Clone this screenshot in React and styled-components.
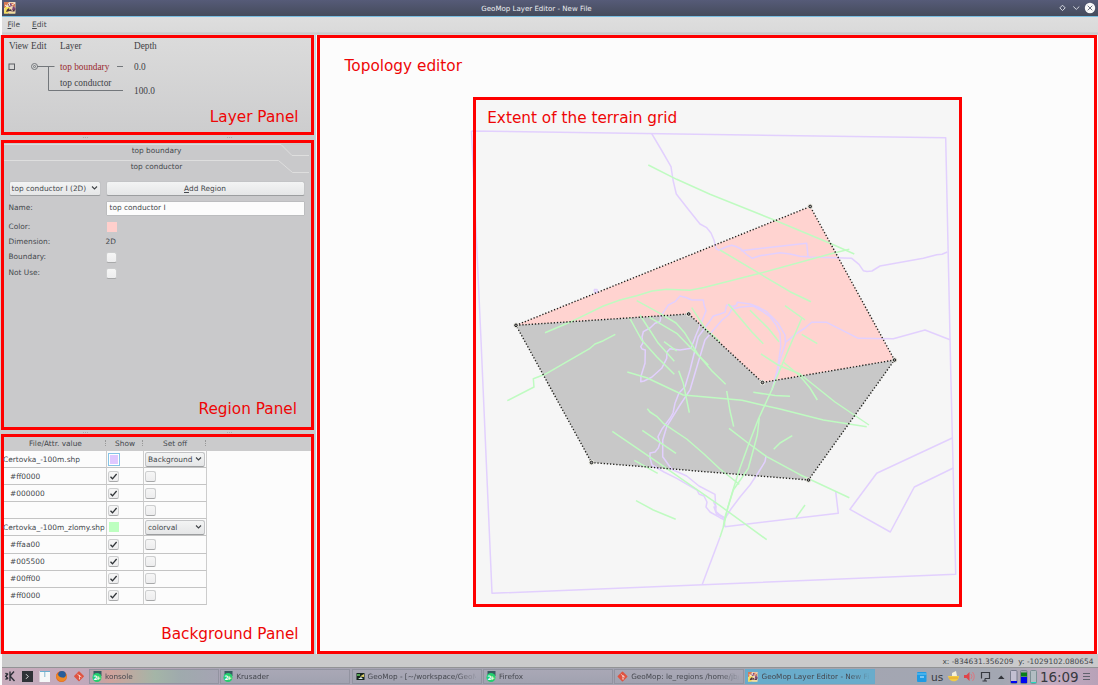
import React from "react";
import styled, { createGlobalStyle } from "styled-components";

const Global = createGlobalStyle`
  * { box-sizing: border-box; }
  body { margin: 0; background: #fff; font-family: "DejaVu Sans", sans-serif; font-size: 7.4px; color: #44484c; overflow: hidden; }
  #root { width: 1098px; height: 685px; }
`;

const Desktop = styled.div`
  width: 1098px; height: 685px; padding-left: 2px; display: flex; flex-direction: column; background: #fbfbfb;
`;
const TitleBar = styled.header`
  position: relative; height: 17px; flex: none; display: flex; align-items: center; justify-content: center;
  background: linear-gradient(#565b78, #454b5b); border-bottom: 1px solid #79bde0; color: #eceef2; font-size: 7.05px;
  padding-right: 27px;
`;
const AppBadge = styled.svg`position: absolute; left: 2px; top: 2px;`;
const WindowButtons = styled.svg`position: absolute; right: 0; top: 0;`;
const MenuBar = styled.nav`
  height: 18px; flex: none; display: flex; gap: 12px; padding: 2px 0 0 5.5px; align-items: flex-start; line-height: 11px;
  background: linear-gradient(#dedede, #dadada 15px, #c6c8ca 16px, #d5d5d5);
`;
const MenuItem = styled.span`
  font-size: 7.5px;
  u { text-underline-offset: 1px; text-decoration-thickness: 1px; }
`;
const Workspace = styled.main`
  height: 619px; flex: none; margin-left: -2px; display: flex; gap: 3px; padding-left: 1px;
  background: linear-gradient(90deg, transparent 315px, #b4d9e6 315px 316px, #f5fbfc 316px), linear-gradient(#dcdcdc, #cbcbcc 110px);
`;
const Sidebar = styled.div`width: 313px; display: flex; flex-direction: column;`;
const Splitter = styled.div`
  height: ${(p) => p.$h}px; flex: none; display: flex; align-items: center; justify-content: space-between; padding: 0 82px;
  background: #cbcbcc;
  &::before, &::after { content: ""; width: 5px; height: 1px; background: repeating-linear-gradient(90deg, #adadad 0 1px, transparent 1px 2px); }
`;
const Panel = styled.section`
  position: relative; height: ${(p) => p.$h}px; flex: none; border: 3px solid #fe0000; background: ${(p) => p.$bg};
`;
const Caption = styled.div`
  position: absolute; right: ${(p) => p.$right || 12.4}px; bottom: ${(p) => p.$bottom}px; color: #ee0606; font-size: 15.3px; line-height: 18px; white-space: nowrap;
`;

const LayerHead = styled.div`
  display: grid; grid-template-columns: 22px 29px 74px 80px; padding: 2px 0 0 5px; height: 21px; line-height: 12px;
  font-family: "Liberation Serif", serif; font-size: 9.3px; color: #3e4145;
`;
const LayerBody = styled.div`
  display: grid; grid-template-columns: 56px 74px 60px; height: 50px;
  font-family: "Liberation Serif", serif; font-size: 9.3px; color: #3e4145;
`;
const LayerTree = styled.svg`grid-column: 1 / 3; grid-row: 1; width: 130px; height: 50px;`;
const LayerNames = styled.div`
  grid-column: 2; grid-row: 1; padding-top: 2px; line-height: 12px; display: flex; flex-direction: column; gap: 4px;
  span:first-child { color: #9a2a2e; }
`;
const LayerDepths = styled.div`grid-column: 3; grid-row: 1; padding-top: 2px; line-height: 12px; display: flex; flex-direction: column; gap: 12px;`;

const Tabs = styled.div`position: relative; height: 36px; display: flex; flex-direction: column; text-align: center; padding-top: 0.6px;`;
const Tab = styled.div`height: 16.4px; line-height: 13px; position: relative; z-index: 1; padding-right: 2px;`;
const TabEdges = styled.svg`position: absolute; left: 0; top: 0;`;
const Form = styled.div`
  display: grid; grid-template-columns: 97px 198px; grid-template-rows: 17px 24px 14px 16px 14px 18px; align-items: center; padding: 0.5px 0 0 4.5px;
`;
const Label = styled.span`transform: translateY(-0.6px);`;
const Raised = styled.div`
  display: flex; align-items: center; justify-content: ${(p) => (p.$combo ? "space-between" : "center")};
  width: ${(p) => p.$w}px; height: 15px; padding: ${(p) => (p.$combo ? "0 2px" : "0")};
  border: 1px solid #c3c4c6; border-bottom-color: #9c9ea0; border-radius: 2.5px; background: linear-gradient(#f3f4f4, #e5e6e7);
  white-space: nowrap; u { text-underline-offset: 1px; }
`;
const NameInput = styled.div`
  width: 199px; height: 15px; border: 1px solid #bcbdbf; background: #fcfcfc; line-height: 12.4px; padding-left: 3px; border-radius: 1px;
`;
const Swatch = styled.span`
  display: block; width: ${(p) => (p.$focus ? 12 : 10)}px; height: ${(p) => (p.$focus ? 13 : 10)}px; background: ${(p) => p.$c};
  ${(p) => (p.$focus ? "border: 1px solid #86c4e6; box-shadow: inset 0 0 0 1px #fff;" : "margin: -1px 0 0 1px;")}
`;
const Box = styled.span`
  display: flex; align-items: center; justify-content: center; width: 11px; height: 11px; border: 1px solid #cdcecf; border-bottom-color: #a8a9aa; border-radius: 2.5px;
  background: linear-gradient(#f6f6f6, #ededee);
`;

const TableHead = styled.div`
  display: grid; grid-template-columns: 102px 37px 63px; height: 14px; line-height: 13px; background: #cbcbcc; text-align: center;
`;
const HeadCell = styled.span`position: relative; padding-left: 1px; &::after { content: ""; position: absolute; right: 0; top: 3px; height: 6px; border-right: 1px dotted #999; }`;
const TableRow = styled.div`display: grid; grid-template-columns: 103px 37px 63px; height: 17.1px;`;
const Cell = styled.div`
  display: flex; align-items: center; border-right: 1px solid #cdcdcd; border-bottom: 1px solid #c4c4c4; white-space: nowrap;
  padding-left: ${(p) => p.$pad || 0}px; font-size: 7.45px;
`;
const FileName = styled.span`margin-left: ${(p) => (p.$root ? -1 : 0)}px;`;

const Editor = styled.section`position: relative; width: 780px; border: 3px solid #fe0000; background: #fcfcfc;`;
const EditorTitle = styled.h1`
  position: absolute; left: 24.6px; top: 19px; margin: 0; font-size: 15.3px; font-weight: 400; line-height: 18px; color: #ee0606;
`;
const MapCanvas = styled.svg`position: absolute; left: 0; top: 0;`;
const ExtentFrame = styled.div`
  position: absolute; left: 152.7px; top: 59px; width: 489.5px; height: 510px; border: 3px solid #fe0000; padding: 9px 11.5px;
  color: #ee0606; font-size: 15.3px; line-height: 18px;
`;
const StatusBar = styled.footer`
  height: 14px; flex: none; background: #cacacb; text-align: right; padding-right: 4.5px; line-height: 15px; font-size: 7.45px; white-space: pre;
  border-bottom: 1px solid #929395;
`;
const Taskbar = styled.div`
  height: 17px; flex: none; display: flex; align-items: center; overflow: hidden; 
  background: linear-gradient(90deg, #c7acbc 0, #c2a9bb 80px, #a9a5b5 220px, #a3a4b1 700px, #a3a7b2 1000px, #c3abc0 1050px, #b8a2b8);
`;
const Launchers = styled.svg`flex: none; width: 87px; height: 17px;`;
const Task = styled.div`
  position: relative; width: 130px; height: 15px; margin-right: 1.3px; flex: none; display: flex; align-items: center; gap: 3px; padding-left: 2px;
  font-size: 7.3px; overflow: hidden; white-space: nowrap; border: 1px solid ${(p) => (p.$active ? "#68aacb" : "#9293a0")};
  background: ${(p) => p.$bg || "linear-gradient(#a9a8b6, #a1a2b0)"}; color: #45474e;
  svg { flex: none; }
  span { -webkit-mask-image: linear-gradient(90deg, #000 88px, transparent 110px); width: 108px; }
`;
const Tray = styled.div`margin-left: auto; display: flex; align-items: center; color: #37393f; height: 17px;`;
const Lang = styled.span`font-size: 10.6px; width: 17px; margin-left: -1px;`;
const Clock = styled.span`font-size: 13.5px; width: 43px; margin-left: 3px; letter-spacing: -0.1px;`;

const Chevron = () => (
  <svg width="7" height="6" viewBox="0 0 7 6"><path d="M1 1.5 3.5 4 6 1.5" fill="none" stroke="#3f4347" strokeWidth="1.1" /></svg>
);
const Check = ({ on }) => (
  <Box>{on && <svg width="9" height="9" viewBox="0 0 9 9"><path d="M1.5 4.8 3.5 6.8 7.6 2" fill="none" stroke="#2f3337" strokeWidth="1.3" /></svg>}</Box>
);
const PixelLogo = () => (
  <g>
    <rect width="11.5" height="11.5" fill="#f2d8b4" />
    <path d="M0 0H5L3 3 1 6H0ZM7 1H11V5L8 4Z" fill="#d67a56" />
    <path d="M4 2 7 1 8 4 5 5ZM9 4 11.5 6V8H8Z" fill="#7d4678" />
    <path d="M1 5H6L4 11.5H0Z" fill="#f4de58" />
    <path d="M3 7.5 5 6 5.5 8 7 7 8 9.5 9 8 11 7.5 10.5 9.5H8L6 9 2 10Z" fill="#4a303b" />
    <path d="M5 11H11" stroke="#f4e28a" />
    <path d="M8 3 11 1M1 3 4 5M5 1 6 4" stroke="#fbf0e6" strokeWidth="1" />
  </g>
);
const Badge = () => (
  <svg width="10" height="13" viewBox="0 0 10 13">
    <rect x="1.5" y="1" width="8" height="5" fill="#385b60" /><circle cx="5" cy="7.5" r="4.5" fill="#24d06f" />
    <text x="1.5" y="10" fontSize="6" fontWeight="700" fill="#fff" textLength="7.2">2+</text>
  </svg>
);
const GitMark = () => (
  <g>
    <rect x="1.8" y="1.8" width="7.4" height="7.4" rx=".7" transform="rotate(45 5.5 5.5)" fill="#df5340" />
    <path d="M3.8 3 6 5.2V8M6 5.2 8 6.2" stroke="#f8ddd8" strokeWidth=".7" fill="none" /><circle cx="6" cy="5" r=".8" fill="#f8ddd8" /><circle cx="6" cy="8" r=".7" fill="#f8ddd8" />
  </g>
);

const VIOLET = [
  "471.5,131 945.7,137.8 950.7,370 955.7,574.3 492,593.3 481,340 471.5,131",
  "651.7,133.7 662,151 671,166.7 673,180 676.3,194 688,209 700,224 706.7,227.7 711,233 714,240 716,248.3 719,250.3 726,247 731.7,245.3 736,246.5 740.7,248.7 746,254 752.3,258.3 760,255.7 780,252.7 790,254 800,256.3 810,257 851.7,258.3 859,264.3 863.3,270.7 867,271.6 872,271 880,266 923.3,258.3 936.7,254.7 942,254.2 947.3,252",
  "740.7,250.7 806.7,243.3 808,256.7",
  "785,342.7 796.7,333.3 805,328 811.7,322.3 826.7,322.3 858.3,338.3 893.3,338.7 925,330 950,339.7",
  "952.3,438 876.7,473.3 850,509.3 890.3,532 914.3,487 953.3,468",
  "835.7,491.7 838.3,513.3 725,526.7 724,520 731,509 740,497 750,485 758,473 765,461.7 766,456",
  "702.3,584.3 720,537.3",
  "660,321.7 661,316 663.3,312.7 668.3,305 675,301.7 680,296 686,297.5 691.7,300 703.3,300 704,305 706,310.7 701.7,321.7 696,335 691,348.3 680,350 670,348.7 667,352 666.7,358.3 661.7,368.3 651.7,377.3 644,381 640.7,381.7 641,376 645,363.3 645.3,350 642,349 640.7,346.7 643,343 642,337 643.3,331.7 650,328 655,323.3 660,321.7",
  "685,386.7 690,370 695,350 698.3,336.7 708.3,323.3 713.3,316 720,314 725,312.3 726.7,305 733,306.5 736.7,305 737.3,302.3 750,304 758,307 766.7,311.7 778.3,323.3 785,335 785.5,343.3 780,360 776.7,376.7",
  "690,390 698,363 705,340 715,328.3 722,320 728.3,315 732,309 741,307 753.3,306 762,311 770,316.7 776,325 780,333.3 780.7,346.7 777.3,370 772,390",
  "685,386.7 679,393 675,403.3 673,413 670,418.3 662,429 658,436.7 660,443 658.3,448 655,452 650,453 650,458 652,465 664,472 676.7,478.3 690,486 697,490 699,494 704,496 707,502 706,507 710,512 720,517.7 725,520",
  "690,390 680,405 666.7,426.7 662.7,440 662.7,456.7 671.7,469.3 686.7,476 699,486 715,494.3 716,511.7 720,515 725,518",
  "713.5,502 716,507 714,507 716.5,514 725,518.5",
  "594,289.5 597,289.5 597.5,292 595,292.5 594,289.5",
];
const GREEN = [
  "648.3,165 676.7,179.3 710,194.3 776.7,221 830,243.3 854.3,254",
  "545,332.7 573.3,320.7 603.3,306 620,300 636.7,295.7 652,291 666.7,289.3 690,290.3 704,287.5 760,273.3 830,254 849.3,249.3",
  "720,250 790,291.7 811,301.7", "785,305.7 805,320", "801.7,334.3 817.3,343.7",
  "728.3,304 751.7,331.7 763.3,343.7", "750,310.3 768.3,328.3 779,341.7",
  "761,354 778,365 800,374 835,402 869,425", "783,361.7 800,376 810,388 817.3,400",
  "753.3,392.3 775,395.5 790,396.3", "726.7,391 730,411 733.7,426.7",
  "627.3,372 646.7,377.7 683.3,395 720,398.3 742,400.2 762,405 780,409 823.3,420 866.7,426.7",
  "729,428.3 748,443 766.7,456.7 800,474.7 849.3,497.7", "773.7,449.3 780,443 792.3,435.7", "805,505 796,517.7",
  "612.3,431.3 656.7,461.7 720,505.7 766.7,539.7",
  "647.3,408.7 650,412 656.7,416.3 663.3,423.3 686.7,439 704,454 720,469 739.3,484.3",
  "642.3,430.3 676,453.3", "634.3,460.3 657.7,473.3", "636,500.7 653.3,510 675.7,519.3",
  "678.7,370.7 683.3,383.3 689.3,412.7",
  "507.3,400.7 534,387 533.3,378.7 545,374.3 590,348.3 595,344 603.3,340.7 615.3,334.3",
  "636.7,300.7 660,313.3 676,323 685,333.3 698.3,355 712,371 725.7,384.3",
  "648.3,316.7 676.7,333.3 690,347 708.3,365", "629.3,317.3 641.7,340 656.7,356.7 674.3,374.3",
  "640,315 658.3,343.3 674.3,361.3", "664,341.7 676.7,351", "691.7,307.7 705,328.3 720,341.7",
  "801.7,318.3 791.7,341.7 783.3,361.7 771.7,390 758.3,419.3 748,446 739.3,470 733,490 728,506.7 724,525 720,537.3",
  "723.3,526.7 725,517 733.3,490 741,479 748.3,468.3 753.3,450 757.3,435 759.3,418",
];
const NODES = [[516, 325.3], [810.2, 206.5], [894.5, 360], [762.5, 382.5], [688.7, 314], [808.5, 480], [591.5, 462.5]];
const ring = (...ids) => ids.map((i) => NODES[i].join(",")).join(" ");

const TerrainMap = () => (
  <MapCanvas width="774" height="613" viewBox="320 38 774 613" fill="none">
    <rect x="474" y="99" width="486" height="506" fill="#f6f6f6" />
    <polygon points={ring(0, 1, 2, 3, 4)} fill="#ffd3d0" />
    <polygon points={ring(0, 4, 3, 2, 5, 6)} fill="#c8c8c8" />
    <g stroke="#e2d0fe" strokeWidth="1.5" strokeLinejoin="round">{VIOLET.map((p) => <polyline key={p} points={p} />)}</g>
    <g stroke="#bffbc1" strokeWidth="1.5" strokeLinejoin="round">{GREEN.map((p) => <polyline key={p} points={p} />)}</g>
    <g stroke="#22221e" strokeWidth="1.4" strokeDasharray="1.3 1.85">
      <polygon points={ring(0, 1, 2, 5, 6)} /><polyline points={ring(0, 4, 3, 2)} />
    </g>
    {NODES.map(([x, y]) => (
      <g key={x}><circle cx={x} cy={y} r="2.7" fill="#e4e4dc" /><circle cx={x} cy={y} r="1.3" fill="#aaa" stroke="#191918" /></g>
    ))}
  </MapCanvas>
);

const rows = [
  ["Certovka_-100m.shp", "#dfc8ff", "Background", true], ["#ff0000"], ["#000000"], [""],
  ["Certovka_-100m_zlomy.shp", "#bdffc0", "colorval"], ["#ffaa00"], ["#005500"], ["#00ff00"], ["#ff0000"],
];

export default function App() {
  return (
    <>
      <Global />
      <Desktop>
        <TitleBar>
          <AppBadge width="12" height="12"><PixelLogo /></AppBadge>
          GeoMop Layer Editor - New File
          <WindowButtons width="44" height="16" fill="none" stroke="#d6d9e2">
            <path d="M8.5 5.2 11.2 7.9 8.5 10.6 5.8 7.9Z" /><path d="M19.3 6.5 22.3 9.4 25.3 6.5" />
            <circle cx="36" cy="8" r="5.2" fill="#fafafa" stroke="none" /><path d="M33.7 5.7 38.3 10.3M38.3 5.7 33.7 10.3" stroke="#6b7080" />
          </WindowButtons>
        </TitleBar>
        <MenuBar><MenuItem><u>F</u>ile</MenuItem><MenuItem><u>E</u>dit</MenuItem></MenuBar>
        <Workspace>
          <Sidebar>
            <Panel $h={100} $bg="linear-gradient(#dbdbdb, #cdcdce)">
              <LayerHead><span>View</span><span>Edit</span><span>Layer</span><span>Depth</span></LayerHead>
              <LayerBody>
                <LayerTree fill="none" stroke="#73777b" strokeWidth="1">
                  <rect x="5" y="5" width="5.5" height="5.5" stroke="#5c5f63" />
                  <circle cx="30.5" cy="7.5" r="3" /><circle cx="30.5" cy="7.5" r="1" /><path d="M33 7.5H50.5M44.5 7.5V31.5H119M113 7.5H119" />
                </LayerTree>
                <LayerNames><span>top boundary</span><span>top conductor</span></LayerNames>
                <LayerDepths><span>0.0</span><span>100.0</span></LayerDepths>
              </LayerBody>
              <Caption $bottom={6}>Layer Panel</Caption>
            </Panel>
            <Splitter $h={5} />
            <Panel $h={290} $bg="#c9c9cb">
              <Tabs>
                <Tab>top boundary</Tab><Tab>top conductor</Tab>
                <TabEdges width="307" height="36" fill="none" stroke="#dedede"><path d="M0 1.5H277L288 12.5H305M0 17.5H274.5L288.5 29.5H305" /></TabEdges>
              </Tabs>
              <Form>
                <Raised $combo $w={92}>top conductor I (2D)<Chevron /></Raised><Raised $w={199}><span><u>A</u>dd Region</span></Raised>
                <Label>Name:</Label><NameInput>top conductor I</NameInput>
                <Label>Color:</Label><Swatch $c="#ffcfcc" />
                <Label>Dimension:</Label><Label>2D</Label>
                <Label>Boundary:</Label><Check />
                <Label>Not Use:</Label><Check />
              </Form>
              <Caption $bottom={9} $right={14}>Region Panel</Caption>
            </Panel>
            <Splitter $h={4} />
            <Panel $h={220} $bg="#fcfcfc">
              <TableHead><HeadCell>File/Attr. value</HeadCell><HeadCell>Show</HeadCell><HeadCell>Set off</HeadCell></TableHead>
              {rows.map(([name, color, mode, focus], i) => (
                <TableRow key={i}>
                  <Cell $pad={color ? 0 : 6}><FileName $root={!!color}>{name}</FileName></Cell>
                  <Cell $pad={1}>{color ? <Swatch $c={color} $focus={focus} /> : <Check on />}</Cell>
                  <Cell $pad={1}>{mode ? <Raised $combo $w={60}>{mode}<Chevron /></Raised> : <Check />}</Cell>
                </TableRow>
              ))}
              <Caption $bottom={8}>Background Panel</Caption>
            </Panel>
          </Sidebar>
          <Editor>
            <TerrainMap />
            <EditorTitle>Topology editor</EditorTitle>
            <ExtentFrame>Extent of the terrain grid</ExtentFrame>
          </Editor>
        </Workspace>
        <StatusBar>x: -834631.356209  y: -1029102.080654</StatusBar>
        <Taskbar>
          <Launchers>
            <path d="M8 3.5V13M8 8 12 3.5M8 8 12.5 13M3.5 5 5.5 7M3.5 11.5 6 9.5M3 8.3H5M6 5.5 4 8.3 6 11" stroke="#30323a" strokeWidth="1.4" fill="none" />
            <rect x="20" y="3" width="11" height="11" fill="#303237" /><path d="M24 6.2 26.3 8.5 24 10.8" stroke="#ddd" fill="none" />
            <rect x="37.5" y="3" width="10.5" height="11" fill="#f5f7f8" /><path d="M38 3.5H48" stroke="#69aed0" /><path d="M42.8 4V9" stroke="#82b7cf" />
            <circle cx="59.5" cy="8.5" r="5.5" fill="#e66b22" /><circle cx="60" cy="7" r="3.9" fill="#275d9b" /><path d="M54.3 6C56 6 56.5 9 60 9.5C62 10 64 9 64.7 6.5C65.5 15.5 54 16 54.3 6" fill="#ec8a27" />
            <g transform="translate(71.5 2.8)"><GitMark /></g>
          </Launchers>
          <Task $bg="linear-gradient(90deg, #b7a5af, #d0a29c 20px, #a4b5a7 65px, #9faaad 90px, #a5a4b3)"><Badge /><span>konsole</span></Task>
          <Task><Badge /><span>Krusader</span></Task>
          <Task>
            <svg width="10" height="11"><rect x="1.5" y="2" width="8" height="7" fill="#17251f" /><path d="M2 3H5V5H2Z" fill="#54a453" /><path d="M5 5.5 9 3V6Z" fill="#e5d36a" /><path d="M3 8 6 6 8 8Z" fill="#d8e6e8" /></svg>
            <span>GeoMop - [~/workspace/GeoMop</span>
          </Task>
          <Task><Badge /><span>Firefox</span></Task>
          <Task><svg width="11" height="11"><GitMark /></svg><span>GeoMop: le_regions /home/jb/</span></Task>
          <Task $active $bg="#69accb"><svg width="10" height="10" viewBox="0 0 12 12"><PixelLogo /></svg><span>GeoMop Layer Editor - New File</span></Task>
          <Tray>
            <svg width="15" height="17"><rect x="0" y="4" width="9.5" height="10" rx="1" fill="#1e9be4" /><path d="M0 6H9.5" stroke="#6ec8f4" /><path d="M3 9H7" stroke="#d6efff" /></svg>
            <Lang>us</Lang>
            <svg width="89" height="17">
              <path d="M0 8H11C11 15 1 15 0 8Z" fill="#f2cb46" /><path d="M4 8V5L8 3 9 8Z" fill="#f5f0db" /><path d="M1 10H10" stroke="#e6a52b" />
              <path d="M16 7H18.5L21.5 4V13L18.5 10H16Z" fill="#e0444a" /><path d="M23 6Q25 8.5 23 11M24.5 4Q28 8.5 24.5 13" fill="none" stroke="#dc7780" />
              <path d="M33.5 4.5H41.5V10.5H37M33.5 4V8M33.5 10.5V8M34.5 13H39M37 10.5V13" stroke="#363940" strokeWidth="1.2" fill="none" />
              <path d="M50 11 53.2 7.5 56.5 11Z" fill="#32343a" />
              <rect x="62.5" y="2.5" width="6.5" height="13" fill="#c2bfd2" stroke="#777b8d" rx="1" /><rect x="63" y="13" width="6" height="2" fill="#0004f0" />
              <rect x="72.5" y="2.5" width="6.5" height="13" fill="#9da5a9" stroke="#777b8d" rx="1" /><rect x="73" y="4.5" width="6" height="4" fill="#087d19" /><rect x="73" y="9" width="6" height="6" fill="#0004f0" />
              <rect x="82.5" y="2.5" width="6" height="13" fill="#b2bdc3" stroke="#7c9095" rx="1" /><path d="M83 14.5H88" stroke="#20d8be" />
            </svg>
            <Clock>16:09</Clock>
            <svg width="15" height="17"><path d="M0 5.5H7M0 8.5H7M0 11.5H7" stroke="#60616d" /></svg>
          </Tray>
        </Taskbar>
      </Desktop>
    </>
  );
}
